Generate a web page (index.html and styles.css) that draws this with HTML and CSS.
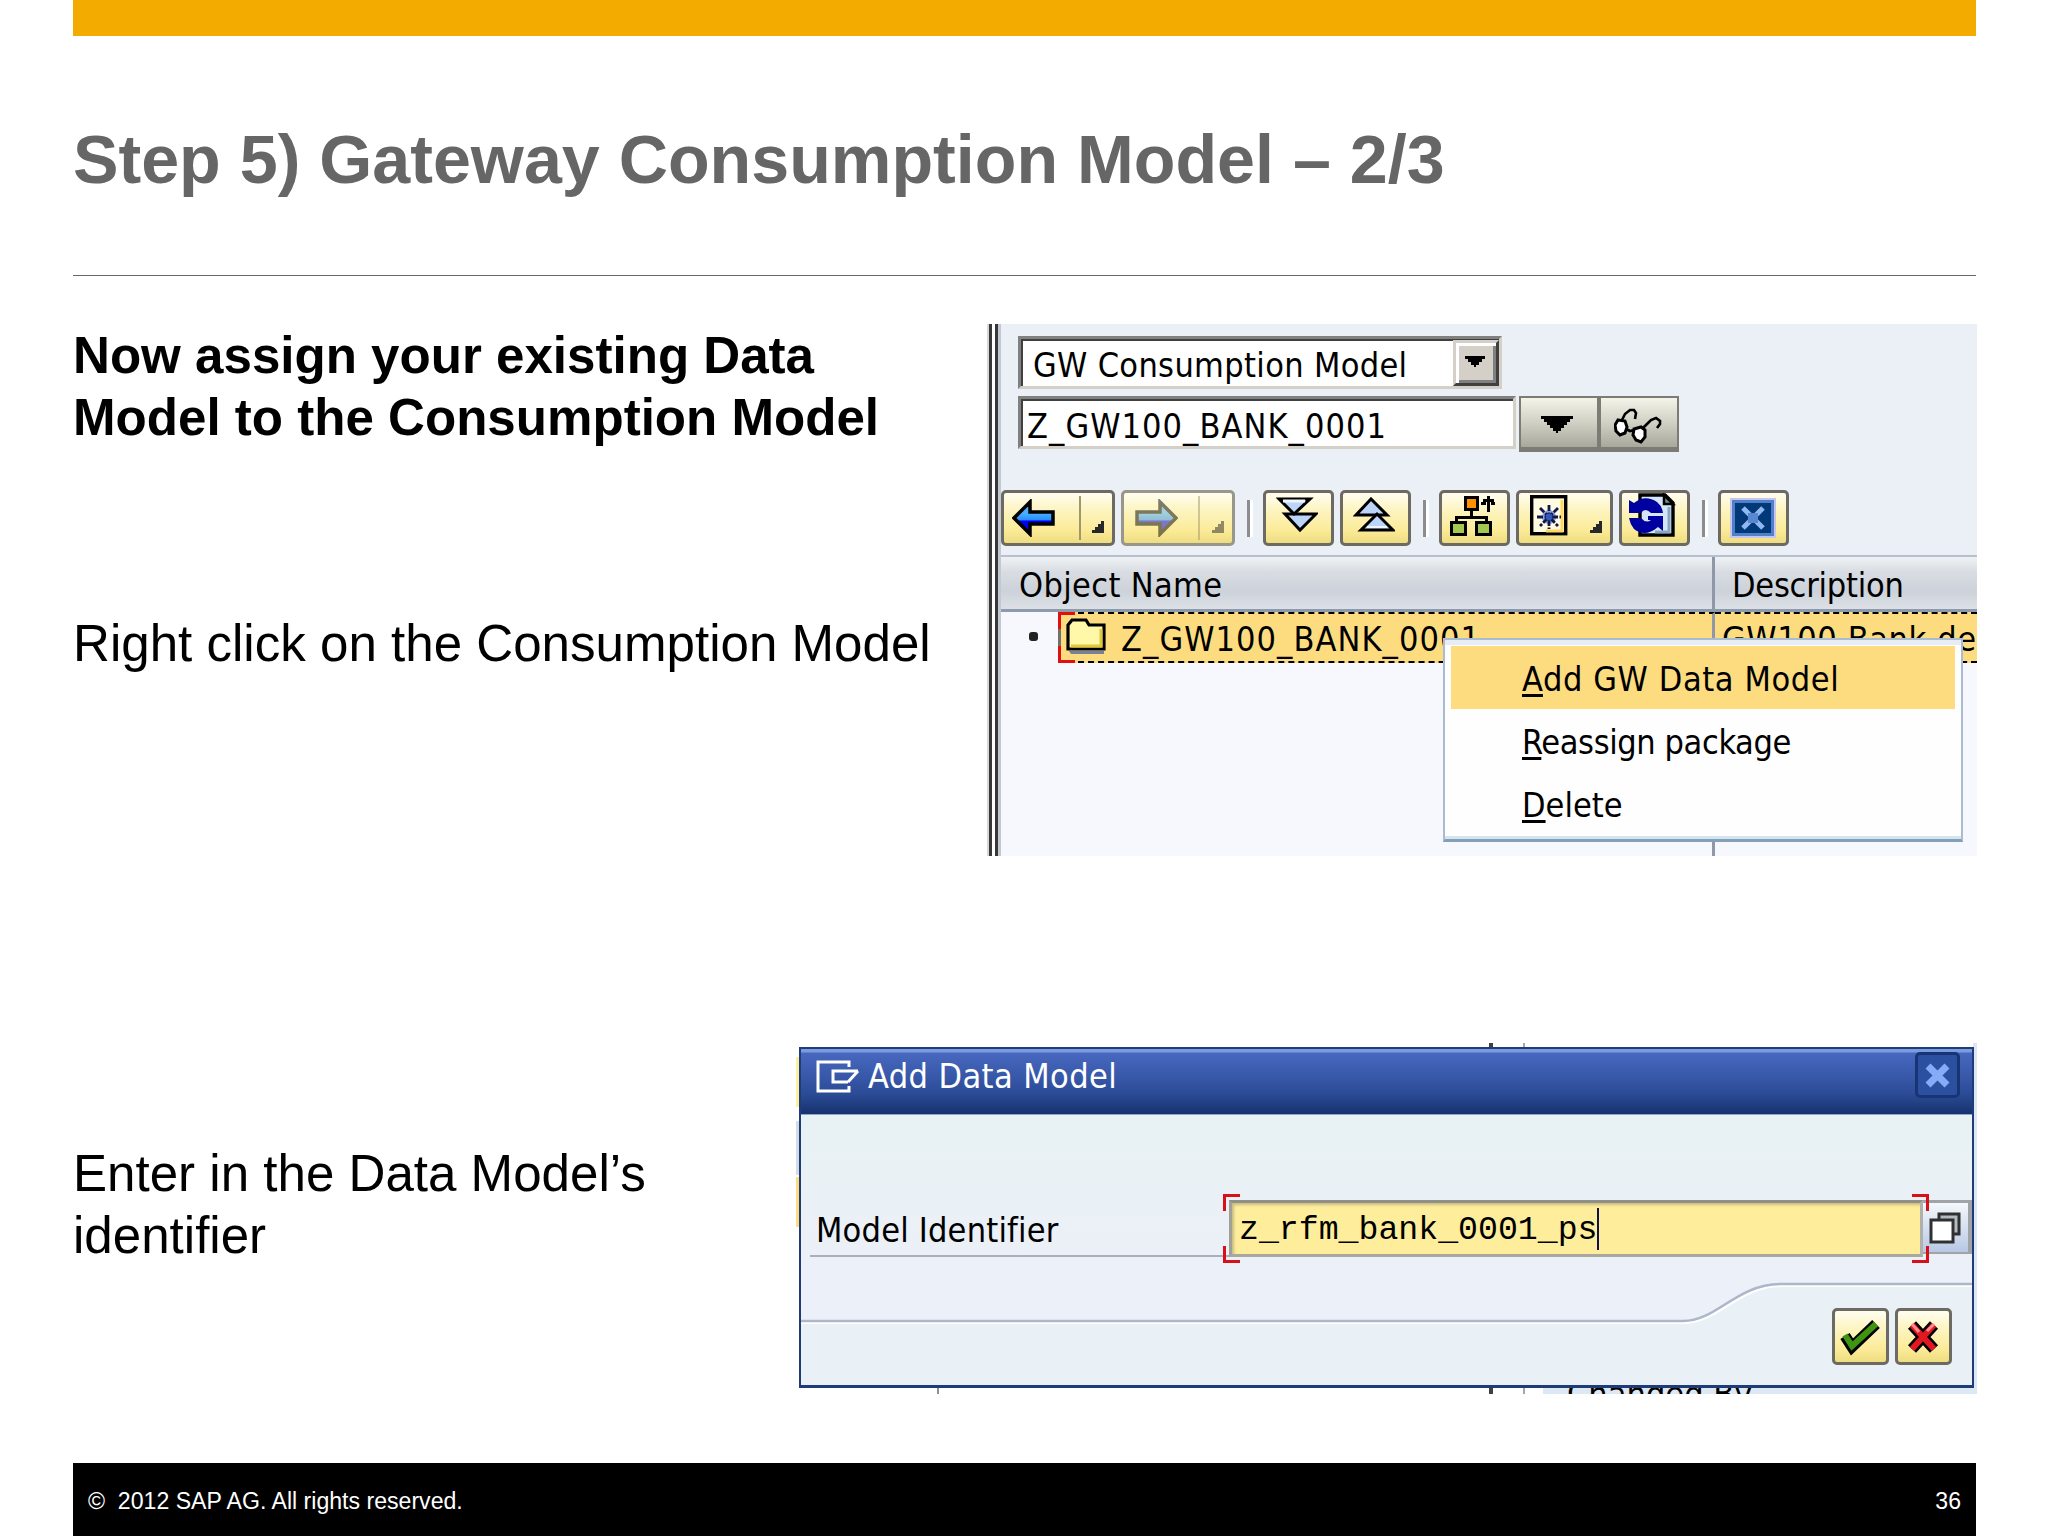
FILE: index.html
```html
<!DOCTYPE html>
<html lang="en">
<head>
  <meta charset="UTF-8">
  <title>Step 5) Gateway Consumption Model</title>
  <link rel="stylesheet" href="styles.css">
</head>
<body>
  <div class="slide">
    <div class="top-bar"></div>
    <h1 class="title">Step 5) Gateway Consumption Model – 2/3</h1>

    <div class="row row-first">
      <div class="text">
        <h2 class="lead">Now assign your existing Data<br>Model to the Consumption Model</h2>
        <p class="para">Right click on the Consumption Model</p>
      </div>

      <div class="navigator">
        <div class="splitter"></div>
        <div class="nav-body">
          <div class="select">
            <span class="ui t-select">GW Consumption Model</span>
            <span class="select-btn"><svg width="20" height="11"><path d="M0 0H20V3H17V6H14V9H11V11H9V9H6V6H3V3H0Z"/></svg></span>
          </div>
          <div class="object-line">
            <div class="object-input"><span class="ui t-object">Z_GW100_BANK_0001</span></div>
            <div class="grey-btn"><svg width="32" height="17"><path d="M0 0H32V3H29V6H26V9H23V12H20V15H17V17H15V15H12V12H9V9H6V6H3V3H0Z"/></svg></div>
            <div class="grey-btn">
              <svg class="glasses" width="48" height="36" viewBox="0 0 48 36" fill="none" stroke="#000" stroke-width="3">
                <path d="M4 12L11 13L13 19L11 25L6 27L2 23L1 17Z" fill="#fff"/>
                <path d="M20 21L27 19L31 22V29L27 34L22 32L19 27Z" fill="#fff"/>
                <path d="M12 21L16 23L20 22M8 12L11 6L16 2H20L22 5L21 11M29 20L33 16L37 12L42 10L46 13V16L43 20" stroke-width="2.6"/>
              </svg>
            </div>
          </div>

          <div class="toolbar">
            <div class="btn split">
              <svg class="arrow" width="43" height="38" viewBox="0 0 43 38">
                <defs><linearGradient id="blue" x1="0" y1="0" x2="0" y2="1"><stop offset=".35" stop-color="#48b0ff"/><stop offset=".55" stop-color="#2a90ff"/><stop offset=".6" stop-color="#0000f0"/></linearGradient></defs>
                <path d="M2 19L18 3V13H41V25H18V35Z" fill="url(#blue)" stroke="#000" stroke-width="3.5"/>
              </svg>
              <span class="divider"></span>
              <svg class="corner" width="12" height="12"><path d="M12 0V12H0V9H3V6H6V3H9V0Z"/></svg>
            </div>
            <div class="btn split disabled">
              <svg class="arrow" width="43" height="38" viewBox="0 0 43 38">
                <path d="M41 19L25 3V13H2V25H25V35Z" fill="url(#blue)" stroke="#000" stroke-width="3.5"/>
              </svg>
              <span class="divider"></span>
              <svg class="corner" width="12" height="12"><path d="M12 0V12H0V9H3V6H6V3H9V0Z"/></svg>
            </div>
            <span class="sep"></span>
            <div class="btn square">
              <svg class="chevrons" width="42" height="36" viewBox="0 0 42 36" fill="#bcd4f8" stroke="#000" stroke-width="3">
                <path d="M9 17H40L24 33Z"/><path d="M3 2H34L18 17Z"/><path d="M7 4H29" stroke="#eef5ff"/>
              </svg>
            </div>
            <div class="btn square last">
              <svg class="chevrons" width="42" height="36" viewBox="0 0 42 36" fill="#bcd4f8" stroke="#000" stroke-width="3">
                <path d="M3 18H34L18 2Z"/><path d="M8 33H40L24 17Z"/><path d="M14 30H34" stroke="#eef5ff" stroke-width="2"/>
              </svg>
            </div>
            <span class="sep"></span>
            <div class="btn square">
              <svg class="up" width="48" height="41" viewBox="0 0 48 41" fill="none" stroke="#000" stroke-width="3" shape-rendering="crispEdges">
                <rect x="16" y="2" width="12" height="12" fill="#ff9000"/>
                <path d="M22 14V21M7 27V22H37V27"/>
                <rect x="2" y="27" width="14" height="12" fill="#a4c850"/>
                <rect x="27" y="27" width="14" height="12" fill="#a4c850"/>
                <path d="M39 17V1M32 8H35V5H43V8H46"/>
              </svg>
            </div>
            <div class="btn wide">
              <svg class="up" width="38" height="41" viewBox="0 0 38 41">
                <rect x="1.7" y="1.7" width="34" height="37" fill="#fffbe0" stroke="#000" stroke-width="3.4"/>
                <path d="M32 5V36H16" fill="none" stroke="#ffd860" stroke-width="3"/>
                <circle cx="19" cy="22" r="7" fill="#8aa0e0"/>
                <path d="M7 22H31M19 10V34M10 13L28 31M28 13L10 31" stroke="#101848" stroke-width="2.8" stroke-dasharray="6 1.5"/>
                <circle cx="19" cy="22" r="3.4" fill="#3058b8"/>
              </svg>
              <svg class="corner" width="12" height="12"><path d="M12 0V12H0V9H3V6H6V3H9V0Z"/></svg>
            </div>
            <div class="btn square">
              <svg class="up" width="48" height="44" viewBox="0 0 48 44">
                <path d="M11 2H36L44 10V42H11Z" fill="#d4e6f8" stroke="#000" stroke-width="3.4"/>
                <path d="M35 2V11H44Z" fill="#6c9490" stroke="#000" stroke-width="2.5"/>
                <path d="M40 14V39H26" fill="none" stroke="#88a8c0" stroke-width="3"/>
                <path d="M0 20V7L5 10Q16 1 28 9Q33 13 34 20H22Q16 14 12 20Z" fill="#0000a0"/>
                <path d="M0 25H12Q17 31 22 27H19V23H34V38L29 34Q16 45 5 36Q1 31 0 25Z" fill="#0000a0"/>
              </svg>
            </div>
            <span class="sep"></span>
            <div class="btn square">
              <svg class="close-icon" width="46" height="40" viewBox="0 0 46 40">
                <rect width="46" height="40" fill="#c8c4f0"/>
                <rect x="3.5" y="3.5" width="39" height="33" fill="#003878" stroke="#5080c8" stroke-width="3"/>
                <path d="M13 10L33 30M33 10L13 30" stroke="#90b8f0" stroke-width="5"/>
                <rect x="18" y="15" width="10" height="10" fill="#5888d0"/>
              </svg>
            </div>
          </div>

          <div class="tree">
            <div class="tree-head">
              <div class="col-name"><span class="ui t-name">Object Name</span></div>
              <div class="col-desc"><span class="ui t-desc">Description</span></div>
            </div>
            <div class="tree-row">
              <span class="bullet"></span>
              <div class="item">
                <i class="mark"></i>
                <svg class="folder" width="41" height="37" viewBox="0 0 41 37">
                  <path d="M3 34H38V37H5Z" fill="#7480a0"/>
                  <path d="M2 32V8L6 3H20L23 8H38V32Z" fill="#fff8a8" stroke="#000" stroke-width="3.2"/>
                  <path d="M5 29H35V12" fill="none" stroke="#e0c838" stroke-width="3"/>
                </svg>
                <span class="ui t-object">Z_GW100_BANK_0001</span>
              </div>
              <div class="item-desc"><span class="ui t-bank">GW100 Bank de</span></div>
            </div>
          </div>
        </div>

        <div class="menu">
          <div class="menu-item active"><span class="ui t-add"><u>A</u>dd GW Data Model</span></div>
          <div class="menu-item"><span class="ui t-reassign"><u>R</u>eassign package</span></div>
          <div class="menu-item"><span class="ui"><u>D</u>elete</span></div>
        </div>
      </div>
    </div>

    <div class="row row-second">
      <div class="text">
        <p class="para">Enter in the Data Model’s<br>identifier</p>
      </div>

      <div class="backdrop">
        <div class="behind"><span class="ui">Changed By</span></div>
        <div class="dialog">
          <div class="dialog-title">
            <svg width="44" height="33" viewBox="0 0 44 33" fill="none" stroke="#fff" stroke-width="3">
              <path d="M33 7V2H2V31H33V26"/><path d="M42 11H17V22H32M42 11L32 22"/>
            </svg>
            <span class="ui t-title">Add Data Model</span>
            <span class="dialog-close"><svg width="25" height="25" viewBox="0 0 25 25"><path d="M3 3L22 22M22 3L3 22" stroke="#86acf8" stroke-width="7"/></svg></span>
          </div>
          <div class="field-line">
            <label class="ui t-label">Model Identifier</label>
            <div class="field">
              <i class="br tl"></i><i class="br tr"></i><i class="br bl"></i><i class="br brr"></i>
              <span class="mono">z_rfm_bank_0001_ps</span><span class="caret"></span>
            </div>
            <div class="match">
              <svg width="32" height="32" viewBox="0 0 32 32" stroke="#303030" stroke-width="3"><rect x="10" y="2" width="20" height="20" fill="#b0bcc0"/><rect x="2" y="8" width="22" height="22" fill="#fff"/></svg>
            </div>
          </div>
          <div class="dialog-foot">
            <svg class="wave" width="1171" height="103" viewBox="0 0 1171 103" fill="none">
              <path d="M0 39H882C916 39 935 2 980 2H1171V103H0Z" fill="#e9f1f7"/>
              <path d="M0 41H882C918 41 937 4 982 4H1171" stroke="#fff" stroke-width="2"/>
              <path d="M0 39H882C916 39 935 2 980 2H1171" stroke="#b0b6ca" stroke-width="2.4"/>
            </svg>
            <div class="foot-buttons">
              <div class="btn ok">
                <svg width="42" height="38" viewBox="0 0 42 38" fill="none"><path d="M5 18L12 29L36 6" stroke="#000" stroke-width="11"/><path d="M5 17L12 28L36 6" stroke="#3f9410" stroke-width="6"/></svg>
              </div>
              <div class="btn ok">
                <svg width="42" height="38" viewBox="0 0 42 38" fill="none"><path d="M9 7L31 31M31 7L9 31" stroke="#000" stroke-width="11"/><path d="M9 7L31 31M31 7L9 31" stroke="#e01820" stroke-width="6"/><path d="M9 6L16 14M31 6L24 13" stroke="#ff8c90" stroke-width="3"/></svg>
              </div>
            </div>
          </div>
        </div>
      </div>
    </div>

    <div class="footer">
      <span>©&nbsp; 2012 SAP AG. All rights reserved.</span>
      <span>36</span>
    </div>
  </div>
</body>
</html>
```
FILE: styles.css
```css
* {
  box-sizing: border-box;
}
body {
  margin: 0;
  background: #fff;
  font-family: "Liberation Sans", Arial, sans-serif;
  color: #000;
}
svg {
  display: block;
  flex: none;
}
.slide {
  width: 2048px;
  height: 1536px;
  padding: 0 72px 0 73px;
  overflow: hidden;
  display: flex;
  flex-direction: column;
}
.top-bar {
  height: 36px;
  background: #f4ab00;
}
.title {
  margin: 0;
  height: 240px;
  padding-top: 83px;
  border-bottom: 1px solid #686868;
  font-size: 68.2px;
  line-height: 80px;
  color: #666;
  white-space: nowrap;
}
.row {
  display: flex;
  justify-content: space-between;
}
.row-first {
  margin-top: 48px;
  height: 532px;
}
.row-second {
  margin-top: 187px;
  height: 351px;
}
.text {
  white-space: nowrap;
  width: 0;
}
.lead,
.para {
  margin: 0;
  font-size: 51.1px;
  line-height: 61.6px;
}
.lead {
  padding-top: 1px;
}
.para {
  margin-top: 165px;
}
.row-second .para {
  margin-top: 100px;
}

/* text inside the application windows */
.ui {
  font-family: "DejaVu Sans Condensed", "DejaVu Sans", sans-serif;
  font-stretch: condensed;
  font-size: 34px;
  line-height: 40px;
  white-space: nowrap;
}
.ui u {
  text-decoration-thickness: 3px;
  text-underline-offset: 3px;
}
.t-select {
  letter-spacing: .33px;
  padding-top: 4px;
}
.t-object {
  letter-spacing: 1.07px;
}
.t-name {
  letter-spacing: .35px;
}
.t-desc {
  letter-spacing: -.24px;
}
.t-bank {
  letter-spacing: .6px;
}
.t-add {
  letter-spacing: .6px;
}
.t-reassign {
  letter-spacing: -.4px;
}
.t-title {
  letter-spacing: .4px;
}
.t-label {
  letter-spacing: .2px;
}

/* navigator window */
.navigator {
  position: relative;
  display: flex;
  width: 990px;
  height: 532px;
  margin-right: -1px;
  background: #ebf0f7;
}
.splitter {
  flex: none;
  width: 14px;
  background: linear-gradient(90deg, #d8d8d8 0 2px, #383838 2px 5px, #fff 5px 8px, #383838 8px 11px, #c4c8d0 11px);
}
.nav-body {
  flex: 1;
  min-width: 0;
  display: flex;
  flex-direction: column;
}
.select {
  margin: 12px 0 0 17px;
  width: 484px;
  height: 53px;
  display: flex;
  justify-content: space-between;
  align-items: center;
  padding-left: 12px;
  background: #fff;
  border: 3px solid;
  border-color: #808080 #d4d0c8 #d4d0c8 #808080;
  box-shadow: inset 2px 2px #404040;
}
.select-btn {
  width: 46px;
  height: 46px;
  display: flex;
  align-items: center;
  justify-content: center;
  padding: 0 3px 3px 0;
  background: #d4d0c8;
  border: 3px solid;
  border-color: #d4d0c8 #404040 #404040 #d4d0c8;
  box-shadow: inset 3px 3px #fff, inset -3px -3px #808080;
}
.object-line {
  display: flex;
  margin: 7px 0 0 17px;
  height: 56px;
}
.object-input {
  width: 498px;
  height: 53px;
  margin-right: 3px;
  padding: 7px 0 0 6px;
  background: #fff;
  border: 3px solid;
  border-color: #808080 #d4d0c8 #d4d0c8 #808080;
  box-shadow: inset 2px 2px #404040;
}
.grey-btn {
  width: 80px;
  display: flex;
  align-items: center;
  justify-content: center;
  padding: 4px 4px 0 0;
  background: linear-gradient(#f4f4ea, #d0d0c4 50%, #a8a89c);
  border: 2px solid #7c7c74;
  border-bottom-width: 5px;
}
.glasses {
  margin: 2px 0 0 2px;
}
.toolbar {
  display: flex;
  align-items: center;
  height: 56px;
  margin: 38px 0 0;
}
.btn {
  flex: none;
  position: relative;
  height: 56px;
  display: flex;
  align-items: center;
  justify-content: center;
  background: linear-gradient(#fffdf0, #fdf4c0 35%, #fbeb98 75%, #eedc80);
  border: 3px solid #6c6a62;
  border-radius: 5px;
}
.square {
  width: 71px;
}
.square.last {
  margin-left: 6px;
}
.split {
  width: 114px;
  justify-content: flex-start;
  padding-left: 8px;
}
.split + .split {
  margin-left: 6px;
  padding-left: 11px;
}
.wide {
  width: 97px;
  margin: 0 6px;
  justify-content: flex-start;
  padding-left: 11px;
}
.disabled {
  border-color: #99968c;
}
.disabled svg,
.disabled .divider {
  opacity: .5;
}
.divider {
  width: 2px;
  height: 44px;
  margin-left: 24px;
  background: #a09868;
}
.split + .split .divider {
  margin-left: 20px;
}
.corner {
  position: absolute;
  right: 8px;
  bottom: 10px;
  fill: #282828;
}
.chevrons {
  margin: -6px 3px 0 0;
}
.up {
  margin-top: -6px;
}
.square .up {
  margin-right: 3px;
}
.close-icon {
  margin-right: 2px;
}
.sep {
  width: 3px;
  height: 37px;
  margin: 0 13px 0 12px;
  background: #8c8c90;
  box-shadow: 3px 0 #fff;
}
.tree {
  flex: 1;
  margin-top: 9px;
  border-top: 2px solid #b8c0d0;
  display: flex;
  flex-direction: column;
  background: linear-gradient(90deg, transparent 711px, #9098a8 711px 714px, transparent 714px), #f6f8fd;
}
.tree-head {
  display: flex;
  height: 55px;
  border-bottom: 3px solid #8c9cac;
  background: linear-gradient(#eef2f4, #d8dce2 30%, #cdd2da 65%, #dce0e6);
}
.col-name,
.col-desc {
  padding: 8px 0 0 17px;
}
.col-name {
  width: 714px;
  padding-left: 18px;
  border-right: 3px solid #9098a8;
}
.tree-row {
  display: flex;
  height: 51px;
  align-items: center;
}
.bullet {
  width: 9px;
  height: 9px;
  margin: 0 20px 2px 28px;
  border-radius: 3px;
  background: #222;
}
.item,
.item-desc {
  height: 51px;
  background: #fddc80;
  border: dashed #000;
  border-width: 2px 0;
}
.item {
  position: relative;
  width: 657px;
  display: flex;
  align-items: center;
  gap: 14px;
  padding-left: 8px;
  border-right: 3px solid #9098a8;
}
.item .ui {
  padding-top: 2px;
}
.item-desc {
  flex: 1;
  padding: 5px 0 0 7px;
}
.mark {
  position: absolute;
  left: 0;
  top: -2px;
  width: 17px;
  height: 51px;
  border: 3px solid #e01010;
  border-right: 0;
  border-image: linear-gradient(#e01010 0 17px, #707070 17px 34px, #e01010 34px) 3;
}
.folder {
  margin-top: -4px;
}
.menu {
  position: absolute;
  left: 456px;
  top: 314px;
  width: 520px;
  height: 204px;
  padding: 6px 6px 0;
  background: #fefefe;
  border: 2px solid #a8bcd4;
  border-bottom: 3px solid #84a0b8;
  box-shadow: inset 0 5px #e8ecf4, inset 0 -3px #d4e4f0;
}
.menu-item {
  height: 63px;
  padding: 13px 0 0 71px;
}
.menu-item.active {
  background: #fddc80;
}

/* add data model popup */
.backdrop {
  position: relative;
  width: 1181px;
  height: 351px;
  margin-right: -1px;
  padding: 4px 3px 6px;
  background:
    linear-gradient(#fbf0a0, #fbf0a0) 0 14px / 4px 50px no-repeat,
    linear-gradient(#d4dce4, #d4dce4) 0 78px / 4px 54px no-repeat,
    linear-gradient(#fddc80, #fddc80) 0 134px / 4px 50px no-repeat,
    linear-gradient(#404040, #404040) 693px 0 / 4px 351px no-repeat,
    linear-gradient(#a0a8b0, #a0a8b0) 727px 0 / 2px 351px no-repeat,
    linear-gradient(#909090, #909090) 141px 345px / 2px 6px no-repeat,
    linear-gradient(#dce8f4, #dce8f4) 747px 345px / 434px 6px no-repeat,
    linear-gradient(#dce6f4, #dce6f4) 1177px 0 / 4px 351px no-repeat;
}
.behind {
  position: absolute;
  left: 771px;
  bottom: 0;
  height: 6px;
  overflow: hidden;
}
.behind .ui {
  display: block;
  margin-top: -14px;
}
.dialog {
  position: relative;
  width: 1175px;
  height: 341px;
  border: 2px solid #203c78;
  border-bottom-width: 3px;
  background: linear-gradient(#e8f2f4 80px, #ecf0f8 220px);
}
.dialog-title {
  height: 66px;
  display: flex;
  align-items: flex-start;
  padding: 11px 12px 0 15px;
  background: linear-gradient(#7c9ce0 0 3px, #4868c0 4px, #2c4c98 44px, #1c3878 60px, #183070);
  border-bottom: 1px solid #90a4cc;
  color: #fff;
}
.dialog-title .ui {
  margin: -4px auto 0 8px;
}
.dialog-close {
  width: 45px;
  height: 46px;
  margin-top: -8px;
  display: flex;
  align-items: center;
  justify-content: center;
  background: #2c50a0;
  border: 3px solid #183474;
  border-radius: 5px;
}
.field-line {
  display: flex;
  margin: 85px 0 0 9px;
  height: 57px;
}
.field-line label {
  width: 419px;
  padding: 10px 0 0 6px;
  border-bottom: 2px solid #a8b0bc;
}
.field {
  position: relative;
  width: 694px;
  display: flex;
  align-items: center;
  padding-left: 7px;
  background: #feee9c;
  border: 3px solid #989890;
  border-color: #909088 #b0b0ac #a8a8a0 #a0a098;
  box-shadow: inset 2px 2px 3px #c8bc80;
}
.mono {
  font-family: "Liberation Mono", "Courier New", monospace;
  font-size: 33.2px;
  line-height: 40px;
  padding-top: 3px;
}
.caret {
  width: 2px;
  height: 42px;
  background: #101050;
}
.br {
  position: absolute;
  width: 17px;
  height: 17px;
  border: 0 solid #d81018;
}
.tl {
  left: -9px;
  top: -9px;
  border-width: 3px 0 0 3px;
}
.tr {
  right: -9px;
  top: -9px;
  border-width: 3px 3px 0 0;
}
.bl {
  left: -9px;
  bottom: -9px;
  border-width: 0 0 3px 3px;
}
.brr {
  right: -9px;
  bottom: -9px;
  border-width: 0 3px 3px 0;
}
.match {
  flex: 1;
  height: 54px;
  display: flex;
  align-items: center;
  justify-content: center;
  padding-right: 2px;
  background: linear-gradient(#f4f8fc, #b8c8e4);
  border: solid #a0a4a8;
  border-width: 3px 4px 2px 0;
}
.dialog-foot {
  position: relative;
  margin-top: 25px;
}
.wave {
  position: absolute;
  left: 0;
  top: 0;
}
.foot-buttons {
  display: flex;
  justify-content: flex-end;
  gap: 6px;
  padding: 26px 20px 0 0;
}
.ok {
  width: 57px;
  height: 57px;
}

.footer {
  margin-top: auto;
  height: 73px;
  display: flex;
  justify-content: space-between;
  padding: 21px 15px 0;
  background: #000;
  color: #fff;
  font-size: 23.1px;
  line-height: 34px;
}
```
